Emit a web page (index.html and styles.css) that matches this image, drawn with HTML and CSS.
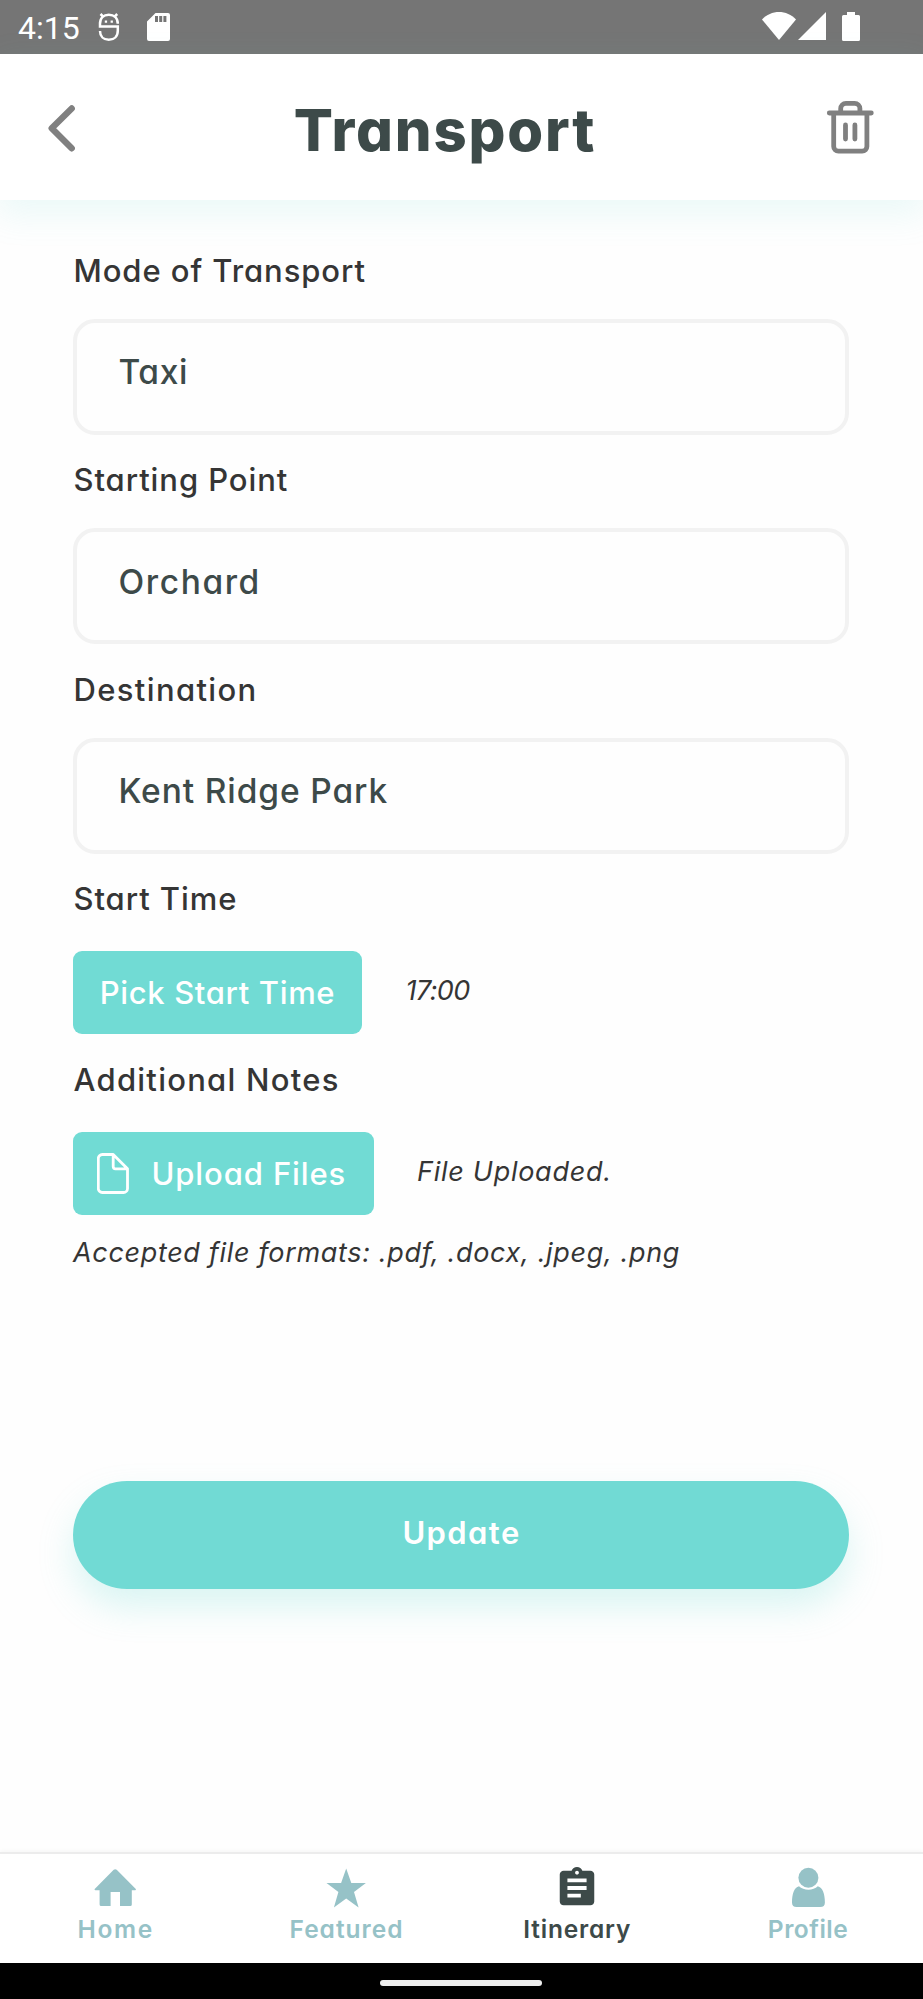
FILE: index.html
```html
<!DOCTYPE html>
<html lang="en">
<head>
<meta charset="utf-8">
<title>Transport</title>
<link rel="stylesheet" href="styles.css">
</head>
<body>
<div class="screen">
  <div class="status">
    <span class="clock">4:15</span>
    <svg class="st-face" width="22" height="30" viewBox="0 0 22 30" fill="none" stroke="#fff" stroke-width="2.500"><path d="M19.800 11.800C19.800 6 16 2.700 10.800 2.700S2 6 2 11.800V14.600H19.800V18.500C19.800 24.500 16 27.800 10.800 27.800S2 24.500 2 19"/><path d="M5.500 5L2.500 2M16.200 5L19.200 2"/><path d="M6.800 9.600h2.300M12.600 9.600h2.300" stroke-width="2.300"/></svg>
    <svg class="st-sd" width="23" height="28" viewBox="0 0 23 28"><path fill="#fff" fill-rule="evenodd" d="M8.500 0H21a2 2 0 0 1 2 2V26a2 2 0 0 1-2 2H2a2 2 0 0 1-2-2V8.500ZM8 3v6h3V3ZM12.200 3v6h3V3ZM16.400 3v6h3V3Z"/></svg>
    <svg class="st-wifi" width="34" height="28" viewBox="0 0 34 28"><path fill="#fff" d="M0 7.500C9-2.500 25-2.500 34 7.500L17 28Z"/></svg>
    <svg class="st-signal" width="28" height="28" viewBox="0 0 28 28"><path fill="#fff" d="M28 0V28H0Z"/></svg>
    <svg class="st-batt" width="18" height="29" viewBox="0 0 18 29"><path fill="#fff" d="M5 0h8v3h3.500a1.500 1.500 0 0 1 1.500 1.500v23a1.500 1.500 0 0 1-1.500 1.500h-15A1.500 1.500 0 0 1 0 27.500v-23A1.500 1.500 0 0 1 1.500 3H5Z"/></svg>
  </div>

  <header class="header">
    <svg class="back" width="28" height="48" viewBox="0 0 28 48" fill="none" stroke="#808080" stroke-width="6.400" stroke-linecap="round" stroke-linejoin="round"><path d="M23.700 4.500L3.700 24.200L23.700 44.300"/></svg>
    <h1 class="title">Transport</h1>
    <svg width="48" height="54" viewBox="0 0 48 54" fill="none" stroke="#808080" stroke-width="4.800" stroke-linecap="round"><path d="M3.300 13H45.300M7.700 13V46.500a4.700 4.700 0 0 0 4.700 4.700H36.200a4.700 4.700 0 0 0 4.700-4.700V13M14.700 13V8.500a5.200 5.200 0 0 1 5.200-5.200H28.700a5.200 5.200 0 0 1 5.200 5.200V13M19.500 25V39M28.900 25V39"/></svg>
  </header>

  <main class="form">
    <label class="label">Mode of Transport</label>
    <div class="field f-taxi">Taxi</div>
    <label class="label">Starting Point</label>
    <div class="field f-from">Orchard</div>
    <label class="label l-to">Destination</label>
    <div class="field">Kent Ridge Park</div>
    <label class="label">Start Time</label>
    <div class="row">
      <button class="pick">Pick Start Time</button>
      <span class="note n-time">17:00</span>
    </div>
    <label class="label l-notes">Additional Notes</label>
    <div class="row">
      <button class="pick upload">
        <svg width="32" height="41" viewBox="0 0 32 41" fill="none" stroke="#fff" stroke-width="2.800" stroke-linejoin="round"><path d="M5.300 1.500H16.200L30.500 15.800V35.500a4 4 0 0 1-4 4H5.300a4 4 0 0 1-4-4V5.500a4 4 0 0 1 4-4ZM16.200 1.500V13.500a2.300 2.300 0 0 0 2.300 2.300H30.500"/></svg>
        <span>Upload Files</span>
      </button>
      <span class="note n-file">File Uploaded.</span>
    </div>
    <p class="formats">Accepted file formats: .pdf, .docx, .jpeg, .png</p>
    <button class="update">Update</button>
  </main>

  <nav class="tabs">
    <a class="tab t-home"><svg width="46" height="46" viewBox="0 0 46 46"><path fill="currentColor" d="M21.700 4.800Q23.200 3.500 24.700 4.800L43.800 24Q44.400 25.300 43 25.300H39.800V39.500a1.500 1.500 0 0 1-1.500 1.500H28V27H18.600V41H9.100a1.500 1.500 0 0 1-1.500-1.500V25.300H3.600Q2 25.300 2.700 24Z"/></svg><span>Home</span></a>
    <a class="tab t-feat"><svg width="46" height="46" viewBox="0 0 46 46"><path fill="currentColor" d="M23.200 3.500L28.300 18H42.900L31 27L35.600 42.400L23.200 33.500L10.900 42.400L15.400 27L3.500 18H18.100Z"/></svg><span>Featured</span></a>
    <a class="tab t-itin"><svg width="46" height="46" viewBox="0 0 24 24"><path fill="currentColor" d="M19 3h-4.180C14.400 1.840 13.300 1 12 1c-1.300 0-2.400.84-2.820 2H5c-1.100 0-2 .9-2 2v14c0 1.100.9 2 2 2h14c1.100 0 2-.9 2-2V5c0-1.100-.9-2-2-2zm-7 0c.55 0 1 .45 1 1s-.45 1-1 1-1-.45-1-1 .45-1 1-1zm2 14H7v-2h7v2zm3-4H7v-2h10v2zm0-4H7V7h10v2z"/></svg><span>Itinerary</span></a>
    <a class="tab t-prof"><svg width="46" height="46" viewBox="0 0 46 46" fill="currentColor"><circle cx="23.400" cy="12.700" r="10"/><path d="M14 21.300C18.500 25.800 28.300 25.800 32.800 21.300C37.500 22.300 39.900 29 39.900 37.500Q39.900 42 35.200 42H11.600Q7 42 7 37.500C7 29 9.300 22.300 14 21.300Z"/></svg><span>Profile</span></a>
  </nav>
  <div class="gesture"><div class="pill"></div></div>
</div>
</body>
</html>
```

FILE: styles.css
```css
* { box-sizing: border-box; }
body { margin: 0; }
.screen {
  width: 923px; height: 1999px; display: flex; flex-direction: column;
  background: #fefefe; overflow: hidden;
  font-family: Inter, "Open Sans", sans-serif; font-feature-settings: "cv11" 1;
}
svg { display: block; flex: none; }
button { border: 0; margin: 0; font: inherit; font-feature-settings: inherit; color: #fff; }

.status {
  height: 54px; flex: none; background: #757575; display: flex; align-items: flex-start;
  padding: 12px 63px 0 18px;
}
.clock { font: 400 32px/32px Roboto, sans-serif; color: #fff; width: 80px; }
.st-sd { margin: 1px 0 0 26.500px; }
.st-wifi { margin-left: auto; }
.st-signal { margin-left: 2px; }
.st-batt { margin-left: 16px; }

.header {
  height: 146px; flex: none; background: #fff; display: flex; align-items: center;
  justify-content: space-between; padding: 0 49px 0 48px;
  box-shadow: 0 12px 32px 3px rgba(112, 218, 211, .13);
}
.back { margin-top: 2px; }
.title { margin: 6px 12px 0 0; font-size: 58px; line-height: 70px; font-weight: 800; color: #3d4a49; letter-spacing: 1.800px; }

.form { flex: 1; padding: 50.600px 74px 0 73px; display: flex; flex-direction: column; }
.label { font-size: 31px; line-height: 40px; font-weight: 500; color: #353535; white-space: nowrap; letter-spacing: .92px; padding-left: .5px; }
.l-to { letter-spacing: 1.350px; }
.l-notes { letter-spacing: 1.250px; }
.field {
  height: 116px; margin: 28px 0 25.500px; border: 4px solid #f2f2f2; border-radius: 22px;
  padding: 27.500px 0 0 41.500px; font-size: 33.500px; line-height: 44px; font-weight: 500; color: #3d4a49;
  letter-spacing: .88px;
}
.f-taxi { letter-spacing: .6px; }
.f-from { letter-spacing: 1.600px; }
.row { height: 83px; margin: 32.400px 0 25.200px; display: flex; }
.pick {
  width: 289px; height: 83px; background: #71dbd4; border-radius: 9px; padding: 0 0 1px;
  display: flex; align-items: center; justify-content: center;
  font-size: 31px; font-weight: 500; white-space: nowrap; letter-spacing: .64px;
}
.upload { width: 300.500px; justify-content: flex-start; padding-left: 24px; letter-spacing: .88px; }
.upload span { margin-left: 22.500px; }
.note { line-height: 79px; margin-left: 43.500px; font-size: 27px; font-style: italic; color: #353535; white-space: nowrap; }
.n-time { letter-spacing: -.6px; }
.n-file { letter-spacing: .73px; }
.formats { margin: -6.800px 0 0; font-size: 27px; line-height: 40px; font-style: italic; color: #353535; white-space: nowrap; letter-spacing: .66px; }
.update {
  height: 108px; flex: none; margin-top: 207.800px; border-radius: 54px; background: #71dad4;
  padding: 0 0 6px 1px; font-size: 31px; font-weight: 600; letter-spacing: 1.400px;
  box-shadow: 0 18px 34px rgba(112, 218, 211, .25);
}

.tabs {
  height: 111px; flex: none; display: grid; grid-template-columns: repeat(4, 1fr);
  background: #fff; border-top: 2px solid #ececec; box-shadow: 0 -1px 4px rgba(0, 0, 0, .04);
}
.tab {
  display: flex; flex-direction: column; align-items: center; padding-top: 10.600px;
  font-size: 24.500px; line-height: 30px; font-weight: 600; color: #96c2c7;
}
.tab span { margin: 3.100px 0 0 .8px; }
.t-home { letter-spacing: 1.700px; }
.t-feat { letter-spacing: 1px; }
.t-itin { letter-spacing: .8px; color: #3d4a49; }
.t-prof { letter-spacing: .5px; }

.gesture { height: 36px; flex: none; background: #000; display: flex; justify-content: center; padding: 17px 1px 0 0; }
.pill { width: 162px; height: 6px; border-radius: 3px; background: #eee; }
```
